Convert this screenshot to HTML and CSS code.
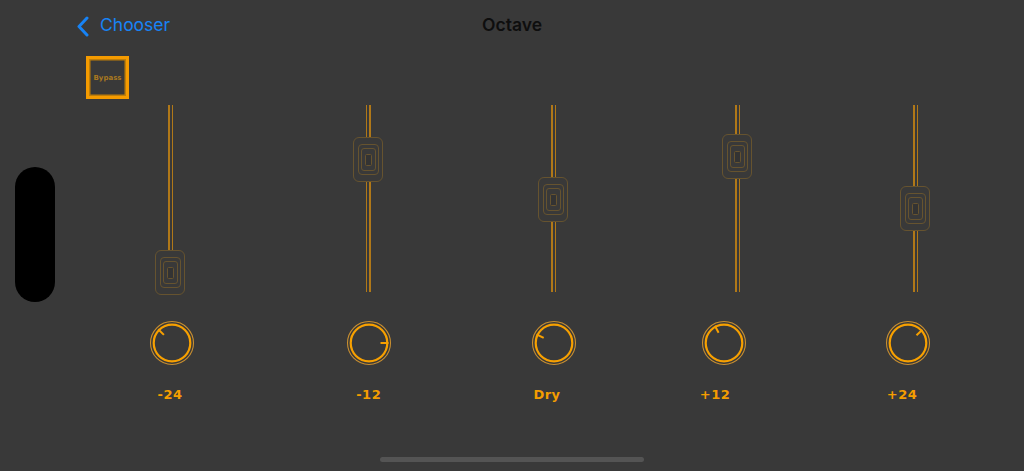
FILE: index.html
```html
<!DOCTYPE html>
<html>
<head>
<meta charset="utf-8">
<link rel="stylesheet" href="styles.css">
</head>
<body>
<div class="screen">
  <header class="nav">
    <div class="back">
      <svg class="chev" width="14" height="22" viewBox="0 0 14 22"><path d="M11 3 L3 11.5 L11 20" fill="none" stroke="#1783f5" stroke-width="3" stroke-linecap="round" stroke-linejoin="round"/></svg>
      <span class="back-text">Chooser</span>
    </div>
    <div class="title">Octave</div>
    <div></div>
  </header>
  <div class="body">
    <aside class="side"><div class="pill"></div></aside>
    <main class="main">
      <div class="bypass"><span>Bypass</span></div>

      <div class="sliders">
        <div class="slider s1"><div class="track"></div><div class="thumb" style="top:145px"><div class="t1"><div class="t2"><div class="t3"></div></div></div></div></div>
        <div class="slider s2"><div class="track"></div><div class="thumb" style="top:32px"><div class="t1"><div class="t2"><div class="t3"></div></div></div></div></div>
        <div class="slider s3"><div class="track"></div><div class="thumb" style="top:72px"><div class="t1"><div class="t2"><div class="t3"></div></div></div></div></div>
        <div class="slider s4"><div class="track"></div><div class="thumb" style="top:29px"><div class="t1"><div class="t2"><div class="t3"></div></div></div></div></div>
        <div class="slider s5"><div class="track"></div><div class="thumb" style="top:81px"><div class="t1"><div class="t2"><div class="t3"></div></div></div></div></div>
      </div>

      <div class="knobs">
        <svg class="knob k1" width="46" height="46" viewBox="0 0 46 46"><circle cx="23" cy="23" r="21.5" class="ring"/><circle cx="23" cy="23" r="18.3" class="dial"/><line x1="14.9" y1="14.9" x2="9.2" y2="9.2" class="tick"/></svg>
        <svg class="knob k2" width="46" height="46" viewBox="0 0 46 46"><circle cx="23" cy="23" r="21.5" class="ring"/><circle cx="23" cy="23" r="18.3" class="dial"/><line x1="34.5" y1="23" x2="42.5" y2="23" class="tick"/></svg>
        <svg class="knob k3" width="46" height="46" viewBox="0 0 46 46"><circle cx="23" cy="23" r="21.5" class="ring"/><circle cx="23" cy="23" r="18.3" class="dial"/><line x1="12.7" y1="17.9" x2="5.5" y2="14.4" class="tick"/></svg>
        <svg class="knob k4" width="46" height="46" viewBox="0 0 46 46"><circle cx="23" cy="23" r="21.5" class="ring"/><circle cx="23" cy="23" r="18.3" class="dial"/><line x1="17.6" y1="12.8" x2="13.9" y2="5.8" class="tick"/></svg>
        <svg class="knob k5" width="46" height="46" viewBox="0 0 46 46"><circle cx="23" cy="23" r="21.5" class="ring"/><circle cx="23" cy="23" r="18.3" class="dial"/><line x1="31.5" y1="15.2" x2="37.4" y2="9.8" class="tick"/></svg>
      </div>

      <div class="labels">
        <div class="label l1">-24</div>
        <div class="label l2">-12</div>
        <div class="label l3">Dry</div>
        <div class="label l4">+12</div>
        <div class="label l5">+24</div>
      </div>
    </main>
  </div>
  <div class="home"></div>
</div>
</body>
</html>
```
FILE: styles.css
```css
* { box-sizing: border-box; }
html, body { margin: 0; padding: 0; }
body { background: #393939; font-family: Inter, "Liberation Sans", sans-serif; }
.screen { position: relative; width: 1024px; height: 471px; overflow: hidden; background: #393939; }

.nav { height: 50px; display: grid; grid-template-columns: 1fr auto 1fr; align-items: center; }
.back { display: flex; align-items: center; padding-left: 76px; gap: 10px; }
.chev { display: block; margin-top: 1px; }
.back-text { color: #1783f5; font-size: 17.5px; line-height: 22px; }
.title { color: #0e0e0e; font-size: 17.5px; font-weight: 600; line-height: 22px; }

.body { display: flex; }
.side { width: 86px; flex: none; }
.pill { margin-top: 117px; margin-left: 15px; width: 40px; height: 135px; border-radius: 20px; background: #000; }

.main { display: flex; flex-direction: column; flex: 1; }

.bypass { margin-top: 6px; width: 43px; height: 43px; border: 3px solid #f59b00; box-shadow: inset 0 0 0 1.5px #c07e08; display: flex; align-items: center; justify-content: center; }
.bypass span { font-family: "DejaVu Sans", sans-serif; font-weight: bold; font-size: 7px; color: #a8781f; line-height: 8px; }

.sliders { margin-top: 6px; height: 187px; display: flex; }
.slider { position: relative; width: 40px; height: 187px; display: flex; justify-content: center; flex: none; }
.s1 { margin-left: 64px; }
.s2 { margin-left: 158px; }
.s3 { margin-left: 145px; }
.s4 { margin-left: 144px; }
.s5 { margin-left: 138px; }
.track { width: 5px; height: 100%; background: linear-gradient(to right, #b07818 0, #b07818 1.5px, transparent 1.5px, transparent 3.5px, #b07818 3.5px, #b07818 5px); }
.thumb { position: absolute; left: 5px; width: 30px; height: 45px; border: 1.5px solid #66532f; border-radius: 6px; background: #393939; display: flex; align-items: center; justify-content: center; }
.t1 { width: 21px; height: 31px; border: 1px solid #66532f; border-radius: 4px; display: flex; align-items: center; justify-content: center; }
.t2 { width: 15px; height: 23px; border: 1px solid #66532f; border-radius: 3px; display: flex; align-items: center; justify-content: center; }
.t3 { width: 7px; height: 12px; border: 1px solid #66532f; border-radius: 1.5px; background: #333; }

.knobs { margin-top: 28px; height: 46px; display: flex; }
.knob { display: block; flex: none; }
.k1 { margin-left: 62.5px; }
.k2 { margin-left: 151px; }
.k3 { margin-left: 139px; }
.k4 { margin-left: 124.5px; }
.k5 { margin-left: 138px; }
.ring { fill: none; stroke: #c98f30; stroke-width: 1.1; }
.dial { fill: none; stroke: #f7a000; stroke-width: 2.2; }
.tick { stroke: #f7a000; stroke-width: 2; stroke-linecap: butt; }

.labels { margin-top: 21px; display: flex; }
.label { width: 60px; flex: none; text-align: center; font-family: "DejaVu Sans", sans-serif; font-weight: bold; font-size: 13px; line-height: 16px; letter-spacing: 0.5px; color: #f49d00; }
.l1 { margin-left: 54px; }
.l2 { margin-left: 138.7px; }
.l3 { margin-left: 118.3px; }
.l4 { margin-left: 108px; }
.l5 { margin-left: 127px; }

.home { position: absolute; left: 380px; bottom: 9px; width: 264px; height: 5px; border-radius: 3px; background: #545454; }
```
